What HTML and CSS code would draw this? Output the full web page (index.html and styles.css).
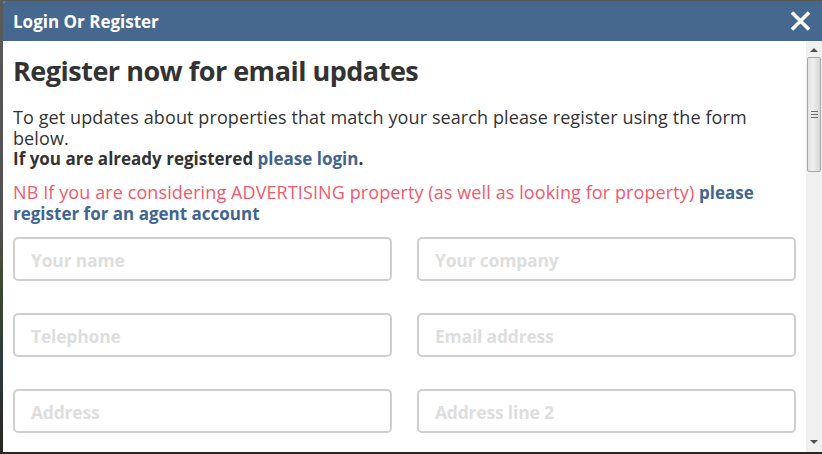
FILE: index.html
```html
<!DOCTYPE html>
<html lang="en">
<head>
<meta charset="utf-8">
<title>Login Or Register</title>
<link rel="stylesheet" href="styles.css">
</head>
<body>
<div class="dialog">
  <header class="header">
    <h2 class="title">Login Or Register</h2>
    <button class="close" aria-label="Close">
      <svg width="21" height="20" viewBox="0 0 21 20"><path d="M2 1.5 L19 18.5 M19 1.5 L2 18.5" stroke="#fff" stroke-width="3.6" stroke-linecap="butt"/></svg>
    </button>
  </header>
  <div class="body">
    <div class="content">
      <h1 class="heading">Register now for email updates</h1>
      <p class="intro">To get updates about properties that match your search please register using the form below.<br><strong class="strong">If you are already registered <a href="#" class="link">please login</a>.</strong></p>
      <p class="nb">NB If you are considering ADVERTISING property (as well as looking for property) <a href="#" class="link strong">please register for an agent account</a></p>
      <form class="form">
        <input class="field" type="text" placeholder="Your name">
        <input class="field" type="text" placeholder="Your company">
        <input class="field" type="text" placeholder="Telephone">
        <input class="field" type="text" placeholder="Email address">
        <input class="field" type="text" placeholder="Address">
        <input class="field" type="text" placeholder="Address line 2">
      </form>
    </div>
    <div class="scrollbar">
      <div class="arrow up"></div>
      <div class="thumb"><span class="grip"></span></div>
      <div class="track"></div>
      <div class="arrow down"></div>
    </div>
  </div>
</div>
</body>
</html>
```
FILE: styles.css
```css
* { box-sizing: border-box; }
html, body { height: 100%; }
body {
  margin: 0;
  overflow: hidden;
  background: linear-gradient(180deg, #5a5a5a 0%, #505050 50%, #3c4a2c 62%, #2e3a3e 80%, #2a2620 100%);
  font-family: "Open Sans", "Noto Sans", sans-serif;
}
.dialog {
  margin: 1px 0 0 3px;
  height: 451px;
  display: flex;
  flex-direction: column;
  background: #fff;
  border-top-left-radius: 3px;
  overflow: hidden;
}
.header {
  height: 40px;
  flex: none;
  background: #46688f;
  display: flex;
  align-items: center;
  justify-content: space-between;
  padding: 0 11px 0 10px;
}
.title {
  margin: 0;
  color: #fff;
  font-size: 17px;
  font-weight: 700;
}
.close {
  border: 0;
  background: none;
  padding: 0;
  display: flex;
  cursor: pointer;
}
.body {
  flex: 1;
  display: flex;
  min-height: 0;
}
.content {
  flex: 1;
  padding: 12px 10px 0 10px;
  color: #333;
}
.heading {
  margin: 0 0 18px;
  font-size: 27px;
  font-weight: 700;
  line-height: 36px;
  letter-spacing: -0.5px;
  color: #333;
}
.intro, .nb {
  margin: 0;
  max-width: 772px;
  font-size: 18px;
  line-height: 20.5px;
  letter-spacing: 0.1px;
}
.intro { margin-bottom: 12px; }
.nb { color: #f2596c; margin-bottom: 12px; }
.link { color: #3f6592; text-decoration: none; }
.strong { font-weight: 700; font-size: 17px; letter-spacing: 0; }
.form {
  display: grid;
  grid-template-columns: 379px 379px;
  column-gap: 25px;
  row-gap: 32px;
}
.field {
  height: 44px;
  border: 2px solid #cfcfcf;
  border-radius: 5px;
  padding: 3px 16px 0;
  font-family: "Open Sans", sans-serif;
  font-size: 17.5px;
  font-weight: 700;
  letter-spacing: -0.2px;
  color: #333;
  outline: none;
}
.field::placeholder { color: #dedede; }
.scrollbar {
  width: 16px;
  flex: none;
  background: #f0f0f0;
  display: flex;
  flex-direction: column;
  align-items: center;
  padding: 0 1px 0 1px;
}
.arrow {
  width: 0; height: 0;
  border-left: 4px solid transparent;
  border-right: 4px solid transparent;
  margin: 7px 0 5px;
}
.arrow.up { border-bottom: 4px solid #505050; }
.arrow.down { border-top: 4px solid #505050; margin: 5px 0 8px; }
.thumb {
  width: 14px;
  height: 115px;
  border: 1px solid #a8a8a8;
  border-radius: 2px;
  background: linear-gradient(90deg, #e2e2e2, #efefef 40%, #d6d6d6);
  display: flex;
  align-items: center;
  justify-content: center;
}
.grip {
  width: 7px;
  height: 7px;
  background: repeating-linear-gradient(180deg, #6a6a6a 0 1px, transparent 1px 3px);
}
.track { flex: 1; }
```
